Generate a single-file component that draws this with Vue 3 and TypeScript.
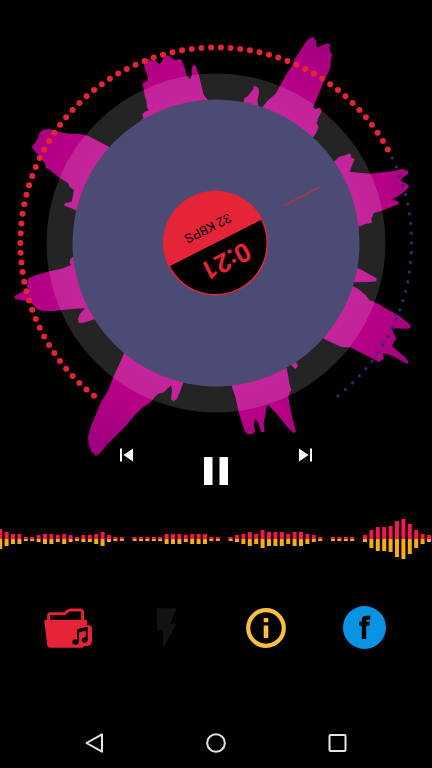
<script setup lang="ts">
interface Dot {
  x: number
  y: number
  played: boolean
}

interface Bar {
  x: number
  up: number
  down: number
}

const CX = 216
const CY = 243
const DOT_COUNT = 100
const PLAYED_DOTS = 72
const START_ANGLE = 128.6
const SWEEP = 282.8

const dots: Dot[] = Array.from({ length: DOT_COUNT }, (_, i) => {
  const angle = ((START_ANGLE + (i * SWEEP) / (DOT_COUNT - 1)) * Math.PI) / 180
  return {
    x: CX + 195.6 * Math.cos(angle),
    y: CY + 195.6 * Math.sin(angle),
    played: i < PLAYED_DOTS,
  }
})

const levels: number[] = [
  10, 7, 5, 5, 2, 2, 4, 5, 5, 4, 5, 4, 2, 4, 4, 5, 7, 4, 2, 2, 0, 2, 2, 2, 2, 2, 5, 5, 5, 4, 5, 5, 5, 2,
  2, 0, 2, 4, 5, 7, 5, 9, 7, 7, 7, 5, 7, 7, 5, 4, 2, 0, 2, 2, 2, 2, 0, 4, 9, 12, 12, 13, 18, 20, 15, 9,
  5, 4,
]

const bars: Bar[] = levels
  .map((level, i) => ({ x: i * 6.4 - 1.8, up: level, down: level === 4 ? 3 : level }))
  .filter((bar) => bar.up > 0)

const time = '0:21'
const bitrate = '32 KBPS'
</script>

<template>
  <main class="player">
    <svg class="visualizer" viewBox="0 0 432 440" role="img" aria-label="Audio visualizer">
      <defs>
        <radialGradient id="flare" gradientUnits="userSpaceOnUse" cx="216" cy="243" r="250">
          <stop offset="0.56" stop-color="#be008b" />
          <stop offset="0.72" stop-color="#b50086" />
          <stop offset="1" stop-color="#98007a" />
        </radialGradient>
        <clipPath id="spikes">
          <path
            transform="translate(0 20) scale(0.33333)"
            d="M422 300L430 297 427 283 435 275 447 270 441 262 440 245 434 228 431 210 427 190 436 186 444 180 441 160 435 150 432 132 434 120 442 116 455 122 464 120 478 133 485 124 492 112 505 106 514 114 525 120 543 117 549 132 556 150 559 165 570 178 576 165 574 148 580 134 588 138 592 152 598 170 604 195 611 225 624 240 600 300 480 340Z
               M328 381L300 366 265 348 240 342 215 342 190 338 165 333 148 326 128 330 117 340 115 352 107 365 95 380 104 394 115 404 125 418 136 432 135 441 150 450 175 470 195 484 205 490 208 500 222 510 218 530 215 545 194 550 193 557 212 564 232 573 300 560 370 430Z"
          />
          <path
            transform="translate(212 20) scale(0.33333)"
            d="M95 246L97 234 108 228 115 218 124 208 124 200 130 198 140 205 141 220 136 240 139 258 130 290 100 280Z
               M150 263L165 244 190 222 205 196 215 178 225 160 240 138 248 118 258 102 270 84 280 67 292 55 305 51 313 62 312 76 318 82 330 76 345 70 354 72 353 90 360 105 356 125 355 145 345 165 335 185 326 208 315 235 303 262 310 268 325 263 329 275 320 290 314 310 320 322 312 340 303 352 260 370 160 300Z
               M366 425L382 410 400 406 412 400 418 406 416 412 428 418 420 436 413 455 440 458 475 461 510 457 545 453 570 447 588 452 588 462 570 475 568 484 582 490 592 499 580 512 560 528 540 538 560 545 560 552 540 560 515 570 485 580 478 598 480 608 460 612 440 620 380 600 340 460Z"
          />
          <path
            transform="translate(0 240) scale(0.33333)"
            d="M220 50L210 58 209 70 214 74 190 85 150 94 110 104 83 116 84 128 80 140 85 146 62 158 44 168 44 177 65 181 90 183 100 195 112 208 125 212 160 213 195 209 225 206 255 205 240 222 234 236 236 249 250 248 284 238 320 200 270 60Z
               M372 340L360 368 340 410 325 450 300 492 285 530 272 560 264 590 266 615 275 636 288 648 300 640 320 615 345 590 375 560 405 525 430 500 450 488 470 465 480 459 490 458 513 436 516 450 513 478 520 484 530 478 540 455 550 428 540 380 400 300Z"
          />
          <path
            transform="translate(212 240) scale(0.33333)"
            d="M436 84L450 90 470 102 494 115 493 124 470 126 428 127 400 110Z
               M422 138L440 148 460 164 472 180 500 192 530 210 565 230 590 250 598 260 590 266 540 265 545 280 553 296 545 308 540 318 560 335 580 352 590 366 585 372 560 358 535 345 512 340 516 356 500 366 480 355 450 340 415 322 390 322 360 308 335 296 320 240 390 140Z
               M236 374L252 367 258 378 250 387Z
               M58 436L70 470 80 515 90 550 100 575 108 583 124 582 130 570 125 555 130 535 140 552 148 576 158 577 155 550 160 525 162 505 168 495 185 512 205 535 225 560 245 580 252 574 245 550 238 520 232 490 229 468 238 450 232 430 228 405 224 384 180 350 60 380Z"
          />
        </clipPath>
      </defs>

      <circle cx="216" cy="243" r="250" fill="url(#flare)" clip-path="url(#spikes)" />
      <circle class="halo" cx="216" cy="243" r="169.5" />
      <circle class="disc" cx="216" cy="243" r="143.5" />
      <line class="needle" x1="284.3" y1="205.7" x2="319.5" y2="187" />

      <circle
        v-for="(dot, i) in dots"
        :key="i"
        :class="dot.played ? 'dot-played' : 'dot-left'"
        :cx="dot.x"
        :cy="dot.y"
        :r="dot.played ? 3 : 1.6"
      />

      <g transform="translate(215.5 243) rotate(153.2)">
        <circle class="hub" r="52.5" />
        <path class="hub-half" d="M-51 0A51 51 0 0 1 51 0Z" />
        <text class="time" x="-1" y="-12">{{ time }}</text>
        <text class="bitrate" y="21">{{ bitrate }}</text>
      </g>
    </svg>

    <div class="controls">
      <button class="skip" type="button" aria-label="Previous">
        <svg width="14" height="14" viewBox="0 0 14 14">
          <path d="M1 0.5H3V13.5H1ZM14 0.5V13.5L4.5 7Z" fill="#fff" />
        </svg>
      </button>
      <button class="pause" type="button" aria-label="Pause">
        <svg width="24" height="28" viewBox="0 0 24 28">
          <path d="M0 0H8.5V28H0ZM15.5 0H24V28H15.5Z" fill="#fff" />
        </svg>
      </button>
      <button class="skip" type="button" aria-label="Next">
        <svg width="14" height="14" viewBox="0 0 14 14">
          <path d="M11 0.5H13V13.5H11ZM0 0.5V13.5L9.5 7Z" fill="#fff" />
        </svg>
      </button>
    </div>

    <svg class="spectrum" viewBox="0 0 432 40" role="img" aria-label="Spectrum">
      <g v-for="bar in bars" :key="bar.x">
        <rect class="bar-up" :x="bar.x" :y="20 - bar.up" width="4" :height="bar.up" />
        <rect class="bar-down" :x="bar.x" y="20" width="4" :height="bar.down" />
      </g>
    </svg>

    <div class="actions">
      <button type="button" aria-label="Music library">
        <svg width="48" height="40" viewBox="41 40 144 120">
          <path d="M55 80V62Q55 57 60 57H103Q112 47 120 46H150Q157 46 157 53V80" fill="none" stroke="#e62438" stroke-width="9" />
          <path d="M46 75H166Q171 76 171 81L169 92H176Q185 93 185 101V140Q184 154 170 154L162 154Q159 159 154 159H57Q52 159 51 153L42 80Q42 75 46 75Z" fill="#e62438" />
          <path d="M143 142V109L169 102V135" fill="none" stroke="#000" stroke-width="6" />
          <path d="M140 104L172 96V107L140 115Z" fill="#000" />
          <ellipse cx="136" cy="142" rx="10" ry="8" fill="#000" />
          <ellipse cx="163" cy="136" rx="9" ry="8" fill="#000" />
        </svg>
      </button>
      <button type="button" aria-label="Flash">
        <svg width="20" height="40" viewBox="380 40 60 120">
          <path d="M380 41H439L419 87H439L398 160V107H380Z" fill="#131313" />
        </svg>
      </button>
      <button type="button" aria-label="Information">
        <svg width="40" height="40" viewBox="0 0 40 40">
          <circle cx="20" cy="20" r="17.8" fill="none" stroke="#fbc043" stroke-width="4.2" />
          <path d="M17.7 10H22.3V14.2H17.7ZM17.7 17.5H22.3V30H17.7Z" fill="#fbc043" />
        </svg>
      </button>
      <a href="#" aria-label="Facebook">
        <svg width="43" height="43" viewBox="340 37 128 128">
          <circle cx="404" cy="101" r="64" fill="#0894e2" />
          <path d="M396 135V96H388V84H396V79Q396 66 410 66H421V78H414Q409 78 409 82V84H420L419 96H409V135Z" fill="#000" />
        </svg>
      </a>
    </div>

    <nav class="system-bar" aria-label="System">
      <button type="button" aria-label="Back">
        <svg width="20" height="20" viewBox="0 0 20 20">
          <path d="M1.5 10L17 1.3V18.7Z" />
        </svg>
      </button>
      <button type="button" aria-label="Home">
        <svg width="20" height="20" viewBox="0 0 20 20">
          <circle cx="10" cy="10" r="8.8" />
        </svg>
      </button>
      <button type="button" aria-label="Recent apps">
        <svg width="20" height="20" viewBox="0 0 20 20">
          <rect x="2.5" y="2" width="16" height="16" rx="1" />
        </svg>
      </button>
    </nav>
  </main>
</template>

<style>
body {
  margin: 0;
  background: #000;
}
</style>

<style scoped>
.player {
  display: flex;
  flex-direction: column;
  box-sizing: border-box;
  min-height: 100vh;
  max-width: 540px;
  margin: 0 auto;
  background: #000;
  font-family: Roboto, sans-serif;
}

svg {
  display: block;
}

button,
a {
  display: flex;
  align-items: center;
  justify-content: center;
  padding: 0;
  border: 0;
  background: none;
  cursor: pointer;
}

.visualizer {
  width: 100%;
  overflow: visible;
}

.halo {
  fill: #fff;
  fill-opacity: 0.14;
}

.disc {
  fill: #4c4b73;
}

.needle {
  stroke: #e62438;
  stroke-width: 1;
}

.dot-played {
  fill: #e62438;
}

.dot-left {
  fill: #35296b;
}

.hub {
  fill: #e62438;
}

.hub-half {
  fill: #000;
}

.time,
.bitrate {
  text-anchor: middle;
}

.time {
  fill: #e62438;
  font-size: 26px;
  font-weight: 700;
}

.bitrate {
  fill: #000;
  font-size: 13px;
}

.controls {
  position: relative;
  display: flex;
  align-items: flex-start;
  justify-content: center;
  gap: 50px;
}

.skip {
  width: 40px;
  height: 30px;
}

.pause {
  width: 40px;
  height: 40px;
  margin-top: 11px;
}

.spectrum {
  width: 100%;
  margin-top: 28px;
}

.bar-up {
  fill: #f5174f;
}

.bar-down {
  fill: #fbae0b;
}

.actions {
  display: grid;
  grid-template-columns: repeat(4, 1fr);
  align-items: center;
  margin-top: 47px;
  padding: 0 18px;
}

.system-bar {
  display: grid;
  grid-template-columns: repeat(3, 1fr);
  height: 50px;
  margin-top: auto;
  padding: 0 34px;
}

.system-bar svg {
  fill: none;
  stroke: #e4e4e4;
  stroke-width: 2;
  stroke-linejoin: round;
}
</style>
